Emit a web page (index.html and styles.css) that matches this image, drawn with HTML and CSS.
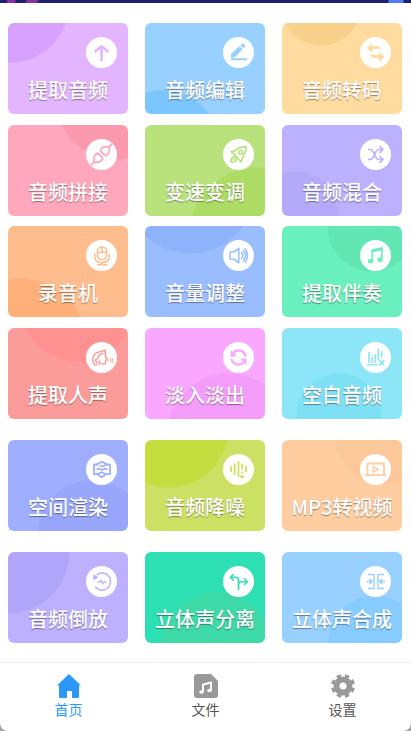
FILE: index.html
```html
<!DOCTYPE html>
<html lang="zh-CN">
<head>
<meta charset="utf-8">
<meta name="viewport" content="width=device-width, initial-scale=1">
<title>音频编辑</title>
<link rel="stylesheet" href="styles.css">
</head>
<body>
<div class="app">
  <div class="banner" aria-hidden="true"></div>
  <main class="tools">
    <section class="grid grid-main">
      <button class="card extract" type="button">
        <svg class="badge" viewBox="0 0 31 31"><path d="M15.500 24V9.500M8.500 15l7-5.800 7 5.800" stroke-width="2.500"/></svg>
        <span class="label">提取音频</span>
      </button>
      <button class="card edit" type="button">
        <svg class="badge" viewBox="0 0 31 31"><path class="fill" d="M8 20.500V17l8.300-7.800 3.400 3.100-8.200 8.200zM17.300 8.300l2-1.700q.7-.4 1.400.3l1.300 1.400q.6.8 0 1.400l-1.500 1.700z"/><path d="M8 22.300h16" stroke-width="2"/></svg>
        <span class="label">音频编辑</span>
      </button>
      <button class="card convert" type="button">
        <svg class="badge" viewBox="0 0 31 31"><path class="fill" d="M6.500 11l5.700-4.700v3h4.300q4 0 4.300 3.200-2-.8-4.300-.8h-4.300v3.800zM24.500 20l-5.700-5v3h-3q-3 0-5.300-1.500.2 4.500 4.500 4.500h3.800v4z"/></svg>
        <span class="label">音频转码</span>
      </button>
      <button class="card join" type="button">
        <svg class="badge" viewBox="0 0 31 31"><g transform="rotate(-45 15.500 15.500)" stroke-width="1.700"><path d="M0 15.500h5.500M25.500 15.500H31M13.800 11.300v8.400M17.200 11.300v8.400M13.800 11.500h-4.300l-4 2.500v3l4 2.500h4.300M17.200 11.500h4.300l4 2.500v3l-4 2.500h-4.300"/></g></svg>
        <span class="label">音频拼接</span>
      </button>
      <button class="card speed" type="button">
        <svg class="badge" viewBox="0 0 31 31"><path d="M12 16l-4-3.500 4-.7Q16 7.500 23 7.800q.2 5.700-3.300 10.200L18 23l-3.500-4zM13 17.800c-4-.8-5 1.800-5 5.200 4.200.2 6.500-1.200 5-5.200z" stroke-width="1.700"/><circle cx="17.700" cy="13.300" r="2" stroke-width="1.600"/><path d="M10 21l2-2" stroke-width="1.300"/></svg>
        <span class="label">变速变调</span>
      </button>
      <button class="card mix" type="button">
        <svg class="badge" viewBox="0 0 31 31"><path d="M8 10.500h2c5 0 4 10 9 10h3M8 20.500h2c5 0 4-10 9-10h3M19.500 7l3.500 3.500-3.500 3.300M19.500 17l3.500 3.500-3.500 3.300" stroke-width="1.700"/></svg>
        <span class="label">音频混合</span>
      </button>
      <button class="card record" type="button">
        <svg class="badge" viewBox="0 0 31 31"><rect x="11.500" y="6.800" width="9" height="13" rx="4.500" stroke-width="1.600"/><path d="M8.800 13.500v3q0 6.200 7.200 6.200t7.200-6.200v-3M16 22.700v2M11 24.700h10M16 7v5.500M11.700 12.500h8.600" stroke-width="1.500"/></svg>
        <span class="label">录音机</span>
      </button>
      <button class="card volume" type="button">
        <svg class="badge" viewBox="0 0 31 31"><path d="M7 12.800q0-1 1-1h3l4.800-3.500v14.500L11 19.200H8q-1 0-1-1zM18.200 12q3 3.500 0 7M20 10q5 5.500 0 11M22 8.300q5 7.200 0 14.400" stroke-width="1.500"/></svg>
        <span class="label">音量调整</span>
      </button>
      <button class="card backing" type="button">
        <svg class="badge" viewBox="0 0 31 31"><path d="M12.300 21V10l9.500-2v11.500" stroke-width="1.700"/><path class="fill" d="M11.500 9.700l11.100-2.300v2.800l-11.100 2.500z"/><ellipse class="fill" cx="10.500" cy="21.200" rx="2.700" ry="2.200"/><ellipse class="fill" cx="19.900" cy="19.700" rx="2.700" ry="2.200"/></svg>
        <span class="label">提取伴奏</span>
      </button>
      <button class="card vocal" type="button">
        <svg class="badge" viewBox="0 0 31 31"><path d="M11 22.700H8.800c-4-5.700-1.500-12.200 4.700-12.700 2 0 3.500-1.500 5.700-1.700v4.200l.5 2.500 1.600 2.500-1.600.8-.3 3q-1.500 1.200-4 .4M17.500 11.500q-5.500 1-5.500 4.500L9.500 18l1.500 3.500M13 18.500l1 2.500-1.500 2" stroke-width="1.500"/><path d="M22.700 17.500v2M24.300 16.500q1.300 2 0 4M25.900 15.700q2 2.800 0 5.500" stroke-width=".9"/></svg>
        <span class="label">提取人声</span>
      </button>
      <button class="card fade" type="button">
        <svg class="badge" viewBox="0 0 31 31"><path d="M9.200 12.300q2-3.800 6.500-3.800 5.200 0 7 6M21.800 18.700q-2 3.800-6.500 3.800-5.200 0-7-5.500" stroke-width="2.300"/><path class="fill" d="M7.500 8v6.500h6.400zM23.500 23v-6.500h-6.400z"/></svg>
        <span class="label">淡入淡出</span>
      </button>
      <button class="card blank" type="button">
        <svg class="badge" viewBox="0 0 31 31"><path d="M9 10v11M12.200 15v6M15.300 12v9M18.300 6.500V18M21.600 9v6.500M6.800 22.700h11" stroke-width="1.600"/><path d="M19.300 18.200l5 5M24.300 18.200l-5 5" stroke-width="1.800"/></svg>
        <span class="label">空白音频</span>
      </button>
    </section>
    <section class="grid grid-more">
      <button class="card space" type="button">
        <svg class="badge" viewBox="0 0 31 31"><path d="M12 11l-4-.7v10l4.500-.6M19.500 11l4.500-.7v10l-4.500-.6M10.500 10.300l5.500-2.600 5 2.600-4.500 2.200-3-1M10.500 15.500l2.500-1 3 1.500 3-1.500 2.500 1M11.500 20.300l4-2 4.500 2-4.300 3z" stroke-width="1.800"/></svg>
        <span class="label">空间渲染</span>
      </button>
      <button class="card denoise" type="button">
        <svg class="badge" viewBox="0 0 31 31"><path d="M8 12v6M11.700 9.500v11.500M15.500 7v16M19.200 9.500v6M23 12v6M19.200 17.500v2.300M17.700 22.300h3l-1.500 1.200z" stroke-width="1.800"/></svg>
        <span class="label">音频降噪</span>
      </button>
      <button class="card video" type="button">
        <svg class="badge" viewBox="0 0 31 31"><path d="M7.500 20.500v-11h16.500v11M5.200 21.200h21" stroke-width="1.800"/><path d="M13.300 12.500v5.800l5-2.900z" stroke-width="1.500"/></svg>
        <span class="label">MP3转视频</span>
      </button>
      <button class="card reverse" type="button">
        <svg class="badge" viewBox="0 0 31 31"><path d="M10.500 9q2.500-2 6-2 7.700.7 8 8.500-.7 8.500-8.500 8.700-4 0-6.800-3.400" stroke-width="1.500"/><path class="fill" d="M7.300 8.300v6.200l5.200-3.300z"/><path d="M11.500 16h2.400l1.300-2 1.300 4 1.200-2h2.800" stroke-width="1.300"/></svg>
        <span class="label">音频倒放</span>
      </button>
      <button class="card split" type="button">
        <svg class="badge" viewBox="0 0 31 31"><path d="M15.500 24V14q0-2.700-2.700-2.700H8M15.500 19q0-3.200 3-3.200H24M10.700 8l-3.300 3.300 3.300 3.300M21 12.500l3.300 3.300L21 19" stroke-width="1.600"/></svg>
        <span class="label">立体声分离</span>
      </button>
      <button class="card merge" type="button">
        <svg class="badge" viewBox="0 0 31 31"><path d="M8 8.500h6v14H8M24 8.500h-6v14h6M6.300 15.500H12M25 15.500h-5.200M9.500 12.800l2.700 2.700-2.700 2.700M22.300 12.800l-2.700 2.700 2.700 2.700" stroke-width="1.400"/></svg>
        <span class="label">立体声合成</span>
      </button>
    </section>
  </main>
  <nav class="tabs">
    <a class="tab active" href="#home">
      <svg class="tab-icon" viewBox="0 0 24 24"><path d="M12 0l12 11.500h-2V23q0 1-1 1h-6v-6q0-1-1-1h-4v7H3q-1 0-1-1V11.500H0z"/></svg>
      <span>首页</span>
    </a>
    <a class="tab" href="#files">
      <svg class="tab-icon" viewBox="0 0 24 24"><path d="M3 0h14l7 7v14q0 3-3 3H3q-3 0-3-3V3q0-3 3-3z"/><path class="note" d="M9 18V10.500l8-2V16" /><ellipse class="note-head" cx="7.500" cy="18" rx="2.300" ry="1.800"/><ellipse class="note-head" cx="15.500" cy="16.500" rx="2.300" ry="1.800"/></svg>
      <span>文件</span>
    </a>
    <a class="tab" href="#settings">
      <svg class="tab-icon" viewBox="0 0 24 24"><circle class="gear-ring" cx="12" cy="12" r="6.500"/><circle class="gear-teeth" cx="12" cy="12" r="10.500" pathLength="80" transform="rotate(10 12 12)"/></svg>
      <span>设置</span>
    </a>
  </nav>
</div>
</body>
</html>
```
FILE: styles.css
```css
* {
  box-sizing: border-box;
}

body {
  margin: 0;
  background: #a6a6a6;
  font-family: "Noto Sans CJK SC", sans-serif;
}

.app {
  display: flex;
  flex-direction: column;
  min-height: 100vh;
  background: #fff;
  border-radius: 0 0 8px 8px;
  overflow: hidden;
}

.banner {
  height: 3px;
  background:
    linear-gradient(110deg, transparent 6px, #8b2fa8 8px 14px, transparent 16px 24px, #8b2fa8 26px 34px, transparent 38px),
    linear-gradient(90deg, transparent calc(100% - 23px), #5579f5 calc(100% - 22px) calc(100% - 8px), transparent calc(100% - 7px)),
    #1d206f;
}

.tools {
  flex: 1;
  display: flex;
  flex-direction: column;
  gap: 21px;
  padding: 20px 9px 19px 8px;
}

.grid {
  display: grid;
  grid-template-columns: repeat(3, 1fr);
  column-gap: 17px;
}

.grid-main {
  min-height: 396px;
  align-content: space-between;
}

.grid-more {
  row-gap: 21px;
}

.card {
  --base: #e4b5ff;
  --spot: #d9a1ff;
  --r: 58px;
  --at: 3px -18px;
  display: flex;
  flex-direction: column;
  align-items: center;
  gap: 8px;
  min-width: 0;
  padding: 14px 0 10px;
  border: 0;
  border-radius: 6px;
  background: radial-gradient(circle at var(--at), var(--spot) calc(var(--r) - 1px), var(--base) var(--r));
  color: #fff;
  font: inherit;
  cursor: pointer;
}

.badge {
  align-self: flex-end;
  width: 31px;
  height: 31px;
  margin-right: 11px;
  border-radius: 50%;
  background: #fff;
  fill: none;
  stroke: var(--base);
  stroke-linejoin: round;
}

.badge .fill {
  fill: var(--base);
  stroke: none;
}

.label {
  font-size: 20px;
  font-weight: 500;
  line-height: 28px;
  white-space: nowrap;
  text-shadow: 0 1px 1px rgba(0, 0, 0, 0.4);
}

.edit { --base: #98d0ff; --spot: #7bc6ff; --r: 60px; --at: 17px 127px; }
.convert { --base: #ffdb9f; --spot: #f8d18c; --r: 41px; --at: 39px -18px; }
.join { --base: #ffa7bd; --spot: #fc99ae; --r: 62px; --at: 109px -27px; }
.speed { --base: #b9e27d; --spot: #acdc64; --r: 70px; --at: 113px 112px; }
.mix { --base: #bcb1ff; --spot: #b5a9fa; --r: 43px; --at: 14px 89px; }
.record { --base: #ffbd8d; --spot: #ffb078; --r: 67px; --at: 12px 119px; }
.volume { --base: #9abdff; --spot: #8eb3fa; --r: 66px; --at: 45px -38px; }
.backing { --base: #6aefbe; --spot: #61e6b4; --r: 45px; --at: 90px 1px; }
.vocal { --base: #fb9c9b; --spot: #ff9190; --r: 58px; --at: 70px -24px; }
.fade { --base: #faa7ff; --spot: #f49cf9; --r: 63px; --at: 84px 108px; }
.blank { --base: #8de5f8; --spot: #7ee0f5; --r: 43px; --at: 57px 88px; }
.space { --base: #9faeff; --spot: #98a7fb; --r: 55px; --at: 84px 95px; }
.denoise { --base: #cce163; --spot: #c4de40; --r: 60px; --at: 24px -12px; }
.video { --base: #ffcda0; --spot: #fcc799; --r: 49px; --at: 102px -4px; }
.reverse { --base: #bcb0ff; --spot: #b1a5fa; --r: 62px; --at: 0 0; }
.split { --base: #2de0b3; --spot: #3dd9a7; --r: 57px; --at: 72px 97px; }
.merge { --base: #98d0ff; --spot: #87ccff; --r: 47px; --at: 93px 90px; }

.tabs {
  display: flex;
  border-top: 1px solid #eee;
  padding: 11px 0 12px;
}

.tab {
  flex: 1;
  display: flex;
  flex-direction: column;
  align-items: center;
  gap: 1px;
  color: #555;
  font-size: 14px;
  line-height: 20px;
  text-decoration: none;
}

.tab-icon {
  width: 24px;
  height: 24px;
  fill: #999;
}

.tab .note {
  fill: none;
  stroke: #fff;
  stroke-width: 2;
}

.tab .note-head {
  fill: #fff;
}

.tab .gear-ring {
  fill: none;
  stroke: #999;
  stroke-width: 6;
}

.tab .gear-teeth {
  fill: none;
  stroke: #999;
  stroke-width: 3;
  stroke-dasharray: 5.5 4.5;
}

.tab.active {
  color: #2b9af3;
}

.tab.active .tab-icon {
  fill: #2b98f7;
}
```
